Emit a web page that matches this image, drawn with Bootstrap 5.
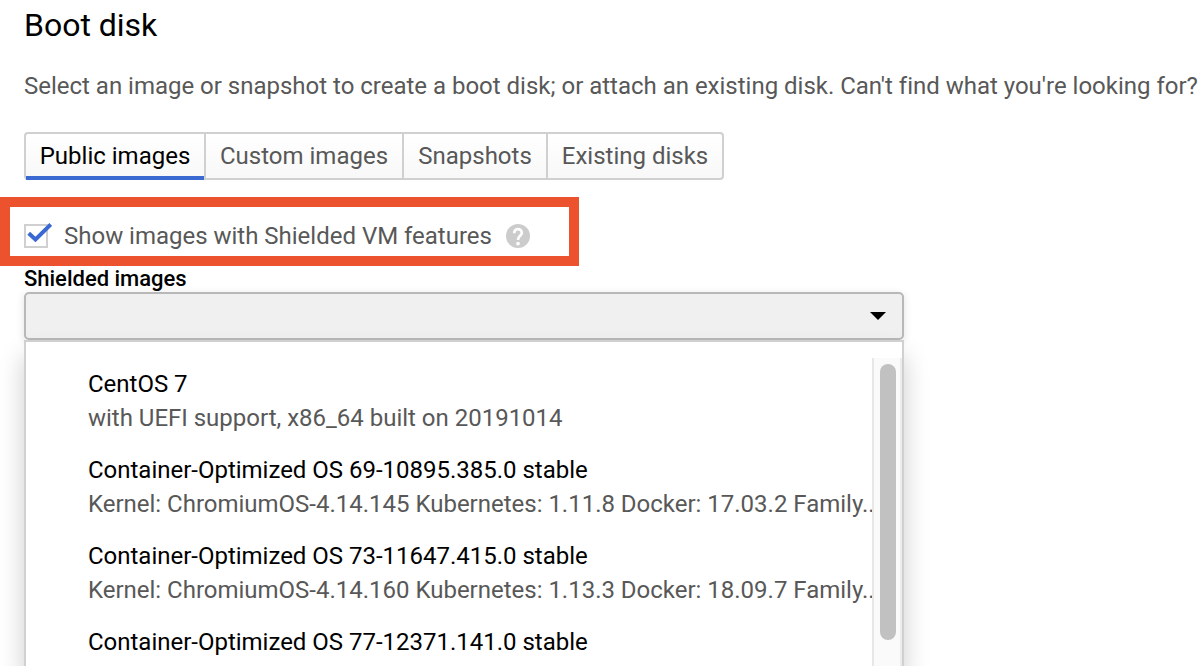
<!DOCTYPE html>
<html lang="en">
<head>
<meta charset="utf-8">
<title>Boot disk</title>
<link rel="stylesheet" href="https://cdn.jsdelivr.net/npm/bootstrap@5.3.0/dist/css/bootstrap.min.css">
<style>
body{font-family:Roboto,sans-serif;font-size:24px;line-height:34px;letter-spacing:-.01px;color:#585858;background:#fff;height:666px;overflow:hidden}
.edge{margin-left:24px}
.title-line{font-size:32px;line-height:40px;padding-top:5px;color:#000;font-weight:400}
.intro{margin-top:24px;height:34px}
.tabs{margin-top:29px;height:48px;width:700px;border:2px solid #d0d0d0;border-radius:4px;background:linear-gradient(#fff,#f8f8f8)}
.tabs button{border:0;border-right:2px solid #d0d0d0;background:none;padding:0;color:#585858;line-height:44px;height:44px}
.tabs button:last-child{border:0}
.tabs .current{color:#000;height:46px;padding-bottom:2px;border-right:0;box-shadow:inset 0 -4px #3b69d2}
.tabs .current + button{border-left:2px solid #d0d0d0}
.w1{width:178px}.w2{width:200px}.w3{width:144px}.w4{width:174px}
.callout{margin-top:17px;width:579px;height:69px;border:10px solid #ec522d;padding:6px 0 0 14px}
.callout .txt{margin-left:12px;margin-top:2px}
.help{margin-left:14px;margin-top:3px}
.field-label{height:26px;line-height:25px;font-size:22px;font-weight:500;color:#000}
.picker{width:880px;height:48px;border:2px solid #b8b8b8;border-radius:5px;background:#f0f0f0;padding:0 16px;box-shadow:0 2px 8px rgba(0,0,0,.12)}
.options{width:880px;height:326px;border:2px solid #d0d0d0;border-bottom:0;background:#fff;padding-top:16px;box-shadow:0 16px 24px rgba(0,0,0,.2)}
.options ul{width:846px;padding:9px 0 0 62px}
.options li{margin-bottom:18px;white-space:nowrap}
.options li div{height:34px}
.options b{font-weight:400;color:#000}
.track{width:30px;background:#fafafa;border-left:2px solid #e7e7e7;border-right:2px solid #ececec;padding:6px}
.thumb{width:16px;height:276px;border-radius:8px;background:#c1c1c1}
</style>
</head>
<body>
<h1 class="title-line edge mb-0">Boot disk</h1>
<p class="intro edge mb-0 text-nowrap">Select an image or snapshot to create a boot disk; or attach an existing disk. Can't find what you're looking for?</p>
<div class="tabs edge d-flex" role="tablist">
<button class="w1 current">Public images</button><button class="w2">Custom images</button><button class="w3">Snapshots</button><button class="w4">Existing disks</button>
</div>
<div class="callout d-flex align-items-center">
<svg class="check" width="28" height="32" viewBox="0 0 28 32"><rect x="1" y="6" width="22" height="22" fill="#fff" stroke="#d0d0d0" stroke-width="2"/><path d="M4.700 14.200L11.500 20.500L26.800 5.500" fill="none" stroke="#3b69d2" stroke-width="4"/></svg>
<span class="txt text-nowrap">Show images with Shielded VM features</span>
<svg class="help" width="24" height="24" viewBox="0 0 24 24"><path fill="#ccc" d="M12 0a12 12 0 100 24 12 12 0 000-24z"/><path d="M8.200 9.300C8.200 3.800 15.800 3.900 15.800 8.800C15.800 11.800 12 12 12 16" fill="none" stroke="#fff" stroke-width="2.700"/><circle cx="12" cy="19.600" r="1.900" fill="#fff"/></svg>
</div>
<div class="field-label edge">Shielded images</div>
<div class="picker edge d-flex align-items-center justify-content-end"><svg width="16" height="8" viewBox="0 0 16 8"><path d="M0 0h16L8 8z"/></svg></div>
<div class="options edge d-flex">
<ul class="list-unstyled mb-0 overflow-hidden">
<li><div><b>CentOS 7</b></div><div>with UEFI support, x86_64 built on 20191014</div></li>
<li><div><b>Container-Optimized OS 69-10895.385.0 stable</b></div><div>Kernel: ChromiumOS-4.14.145 Kubernetes: 1.11.8 Docker: 17.03.2 Family...</div></li>
<li><div><b>Container-Optimized OS 73-11647.415.0 stable</b></div><div>Kernel: ChromiumOS-4.14.160 Kubernetes: 1.13.3 Docker: 18.09.7 Family...</div></li>
<li><div><b>Container-Optimized OS 77-12371.141.0 stable</b></div><div>Kernel: ChromiumOS-4.19.76 Kubernetes: 1.14.7 Docker: 19.03.1 Family...</div></li>
</ul>
<div class="track"><div class="thumb"></div></div>
</div>
<script src="https://cdn.jsdelivr.net/npm/bootstrap@5.3.0/dist/js/bootstrap.bundle.min.js"></script>
</body>
</html>
